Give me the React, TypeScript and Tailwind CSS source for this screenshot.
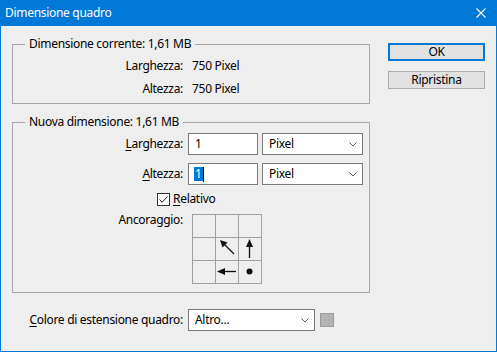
import React from 'react';

function Chevron() {
  return (
    <svg width="8" height="5" viewBox="0 0 8 5" className="shrink-0">
      <path d="M0.5 0.5 L4 4 L7.5 0.5" fill="none" stroke="#555" strokeWidth="1" />
    </svg>
  );
}

function Select({ value, w }: { value: string; w: string }) {
  return (
    <div className={`${w} h-[22px] bg-white border border-[#7a7a7a] flex items-center justify-between pl-[6px] pr-[5px] box-border`}>
      <span className="text-black leading-none">{value}</span>
      <Chevron />
    </div>
  );
}

function U({ c }: { c: string }) {
  return <span className="underline underline-offset-2 decoration-1">{c}</span>;
}

function Cell({ children }: { children?: React.ReactNode }) {
  return <div className="w-[22px] h-[22px] bg-[#eeeeee] flex items-center justify-center">{children}</div>;
}

export default function App() {
  return (
    <div className="w-[497px] h-[352px] bg-[#0078d7] flex flex-col font-['Segoe_UI','Noto_Sans',sans-serif] text-[12px] tracking-[-0.3px] text-black select-none">
      {/* title bar */}
      <div className="h-[26px] shrink-0 flex items-center justify-between pl-[5px] pr-[11px] text-white">
        <span className="leading-none">Dimensione quadro</span>
        <svg width="10" height="10" viewBox="0 0 10 10">
          <path d="M0.5 0.5 L9.5 9.5 M9.5 0.5 L0.5 9.5" stroke="white" strokeWidth="1.1" />
        </svg>
      </div>
      {/* body */}
      <div className="flex-1 mx-[1px] mb-[1px] bg-[#eeeeee] flex flex-col">
        <div className="flex">
          {/* left column */}
          <div className="ml-[11px] w-[358px] flex flex-col">
            {/* group 1 */}
            <div className="relative mt-[18px] h-[60px] border border-[#a7a7a7] box-border">
              <span className="absolute left-[12px] -top-[9px] px-[4px] bg-[#eeeeee] leading-[16px]">Dimensione corrente: 1,61 MB</span>
              <div className="pt-[13px] flex flex-col gap-[7px]">
                <div className="flex h-[16px] leading-[16px]">
                  <span className="w-[170px] text-right">Larghezza:</span>
                  <span className="ml-[9px]">750 Pixel</span>
                </div>
                <div className="flex h-[16px] leading-[16px]">
                  <span className="w-[170px] text-right">Altezza:</span>
                  <span className="ml-[9px]">750 Pixel</span>
                </div>
              </div>
            </div>
            {/* group 2 */}
            <div className="relative mt-[18px] h-[171px] border border-[#a7a7a7] box-border">
              <span className="absolute left-[12px] -top-[9px] px-[4px] bg-[#eeeeee] leading-[16px]">Nuova dimensione: 1,61 MB</span>
              <div className="pt-[10px] flex flex-col">
                <div className="flex items-center h-[22px]">
                  <span className="w-[170px] text-right"><U c="L" />arghezza:</span>
                  <div className="ml-[5px] w-[70px] h-[22px] bg-white border border-[#7a7a7a] box-border flex items-center pl-[6px]">1</div>
                  <div className="ml-[4px]"><Select value="Pixel" w="w-[101px]" /></div>
                </div>
                <div className="flex items-center h-[22px] mt-[8px]">
                  <span className="w-[170px] text-right"><U c="A" />ltezza:</span>
                  <div className="ml-[5px] w-[70px] h-[22px] bg-white border border-[#7a7a7a] box-border flex items-center pl-[5px]">
                    <span className="bg-[#0078d7] text-white h-[14px] leading-[14px] px-[1px]">1</span>
                    <span className="w-px h-[15px] bg-black"></span>
                  </div>
                  <div className="ml-[4px]"><Select value="Pixel" w="w-[101px]" /></div>
                </div>
                <div className="flex items-center h-[16px] mt-[6px] ml-[144px]">
                  <div className="w-[13px] h-[13px] bg-white border border-[#333333] box-border flex items-center justify-center">
                    <svg width="11" height="11" viewBox="0 0 11 11">
                      <path d="M1.5 5.5 L4.2 8.2 L9.5 2.5" fill="none" stroke="#222" strokeWidth="1" />
                    </svg>
                  </div>
                  <span className="ml-[3px] leading-[16px]"><U c="R" />elativo</span>
                </div>
                <div className="flex items-start mt-[5px]">
                  <span className="w-[170px] text-right leading-[16px]">Ancoraggio:</span>
                  <div className="ml-[9px] mt-[2px] grid grid-cols-[22px_22px_22px] gap-px bg-[#a0a0a0] p-px">
                    <Cell />
                    <Cell />
                    <Cell />
                    <Cell />
                    <Cell>
                      <svg width="22" height="22" viewBox="0 0 22 22">
                        <path d="M18 16 L8 6" stroke="#111" strokeWidth="1.3" />
                        <path d="M4 2 L11.5 4.5 L6.5 9.5 Z" fill="#111" />
                      </svg>
                    </Cell>
                    <Cell>
                      <svg width="22" height="22" viewBox="0 0 22 22">
                        <path d="M10.5 7 L10.5 20" stroke="#111" strokeWidth="1.3" />
                        <path d="M10.5 1 L14 9 L7 9 Z" fill="#111" />
                      </svg>
                    </Cell>
                    <Cell />
                    <Cell>
                      <svg width="22" height="22" viewBox="0 0 22 22">
                        <path d="M7 10.5 L20 10.5" stroke="#111" strokeWidth="1.3" />
                        <path d="M1 10.5 L9 7 L9 14 Z" fill="#111" />
                      </svg>
                    </Cell>
                    <Cell>
                      <svg width="22" height="22" viewBox="0 0 22 22">
                        <circle cx="10.5" cy="10.5" r="3" fill="#111" />
                      </svg>
                    </Cell>
                  </div>
                </div>
              </div>
            </div>
          </div>
          {/* right column */}
          <div className="ml-[18px] mt-[17px] w-[97px] flex flex-col">
            <div className="h-[18px] border-2 border-[#0078d7] bg-[#e1e1e1] box-border flex items-center justify-center leading-none">OK</div>
            <div className="mt-[10px] h-[18px] border border-[#adadad] bg-[#e1e1e1] box-border flex items-center justify-center leading-none">Ripristina</div>
          </div>
        </div>
        {/* bottom row */}
        <div className="flex items-center mt-[16px]">
          <span className="w-[182px] text-right"><U c="C" />olore di estensione quadro:</span>
          <div className="ml-[5px]"><Select value="Altro..." w="w-[127px]" /></div>
          <div className="ml-[5px] w-[14px] h-[14px] bg-[#b3b3b3] border border-[#9c9c9c] box-border"></div>
        </div>
      </div>
    </div>
  );
}
